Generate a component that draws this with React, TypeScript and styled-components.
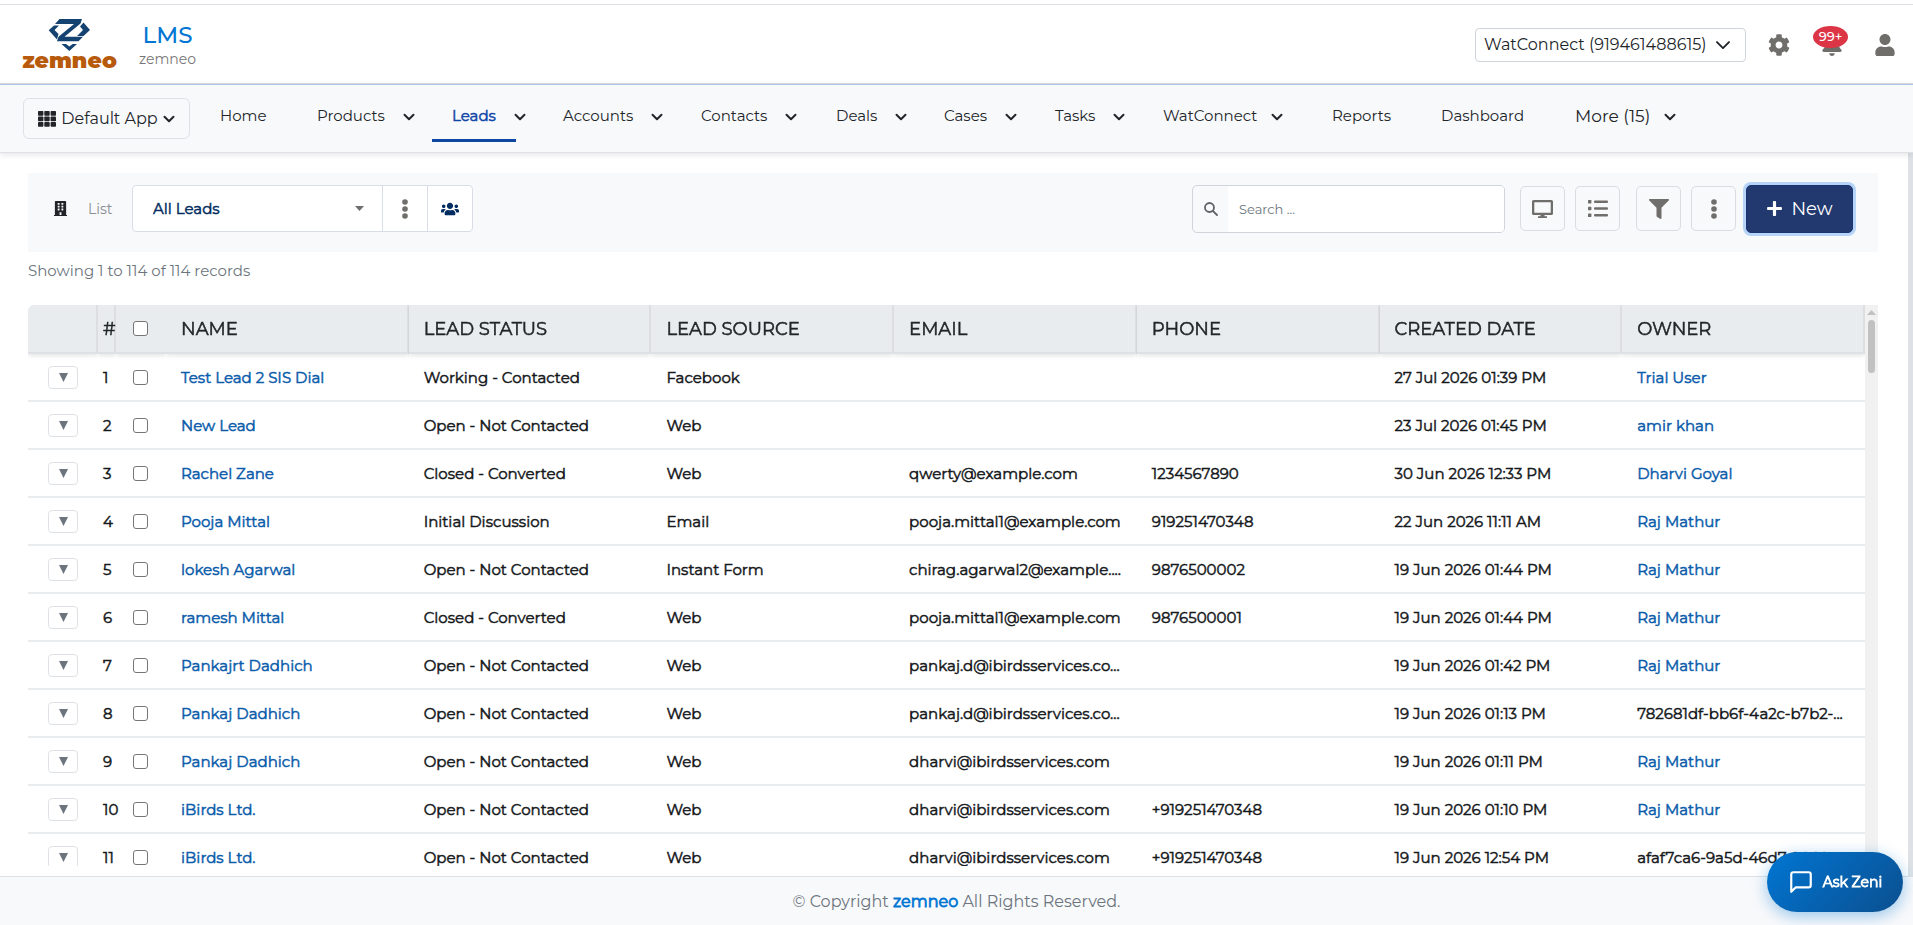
import React from "react";
import styled, { createGlobalStyle, css } from "styled-components";
import { FaCog, FaBell, FaUser, FaBuilding, FaUsers, FaFilter, FaPlus } from "react-icons/fa";
import { FiMessageSquare } from "react-icons/fi";

const GlobalStyle = createGlobalStyle`
  *, *::before, *::after { box-sizing: border-box; }
  body { margin: 0; background: #fff; }
  body, button, input, select {
    font-family: Montserrat, Inter, "Liberation Sans", sans-serif;
    color: #212529;
  }
  a { text-decoration: none; color: inherit; }
  button { cursor: pointer; padding: 0; }
`;

/* Regular weight thickened by a thin outline, so emphasis keeps the regular widths. */
const emphasis = css`
  font-weight: 400;
  -webkit-text-stroke: 0.5px currentColor;
`;

const strongEmphasis = css`
  font-weight: 400;
  -webkit-text-stroke: 0.8px currentColor;
`;

const Page = styled.div`
  display: flex;
  flex-direction: column;
  height: 100vh;
  overflow: hidden;
`;

const TopBar = styled.header`
  flex: none;
  display: flex;
  align-items: center;
  height: 80px;
  margin-top: 4px;
  padding: 2px 17px 0 19px;
  border-top: 1px solid #dee2e6;
  border-bottom: 1px solid #dcdcdc;
`;

const Logo = styled.svg`
  display: block;
  width: 102px;
  height: 64px;
`;

const Brand = styled.div`
  display: flex;
  flex-direction: column;
  align-items: center;
  margin: 0 auto 0 18px;
`;

const BrandName = styled.strong`
  margin-bottom: 2px;
  font-size: 23px;
  font-weight: 500;
  line-height: 28px;
  color: #0176d3;
`;

const BrandSub = styled.span`
  margin-bottom: 2px;
  font-size: 14px;
  line-height: 16px;
  color: #777;
`;

const SelectWrap = styled.div`
  display: flex;
  align-items: center;
  position: relative;
`;

const AccountSelect = styled.select`
  appearance: none;
  width: 271px;
  height: 34px;
  padding: 0 8px;
  border: 1px solid #ced4da;
  border-radius: 4px;
  background: #fff;
  font-size: 16px;
  line-height: 24px;
`;

const SelectMark = styled.span<{ $right: number }>`
  position: absolute;
  right: ${(p) => p.$right}px;
  display: flex;
  pointer-events: none;
`;

const TopAction = styled.button<{ $gap: number }>`
  display: flex;
  position: relative;
  margin-left: ${(p) => p.$gap}px;
  border: 0;
  background: none;
  color: #706e6b;
`;

const Badge = styled.span`
  position: absolute;
  top: -8px;
  left: -8px;
  width: 35px;
  height: 22px;
  border-radius: 50%;
  background: #dc3545;
  color: #fff;
  font-size: 13px;
  font-weight: 500;
  line-height: 21px;
  text-align: center;
`;

const NavBar = styled.nav`
  flex: none;
  position: relative;
  z-index: 1;
  display: flex;
  align-items: flex-start;
  height: 69px;
  padding: 13px 23px 0;
  border-top: 1px solid #aec6e4;
  border-bottom: 1px solid #dee2e6;
  background: #f8f9fb;
  box-shadow: 0 2px 6px rgba(0, 0, 0, 0.1);
`;

const AppButton = styled.button`
  display: flex;
  align-items: center;
  justify-content: center;
  gap: 5px;
  width: 167px;
  height: 41px;
  margin-right: 10px;
  border: 1px solid #dee2e6;
  border-radius: 6px;
  background: #f8f9fb;
  font-size: 16px;
`;

const NavItem = styled.div<{ $width: number }>`
  flex: none;
  display: flex;
  align-items: flex-start;
  width: ${(p) => p.$width}px;
`;

const NavLink = styled.a<{ $active?: boolean; $large?: boolean; $tight?: boolean }>`
  height: 44px;
  padding: 0 ${(p) => (p.$tight ? 16 : 20)}px 0 20px;
  border-bottom: 3px solid ${(p) => (p.$active ? "#0d47a1" : "transparent")};
  color: ${(p) => (p.$active ? "#1046a8" : "#212529")};
  font-size: ${(p) => (p.$large ? 17 : 15)}px;
  line-height: 36px;
  white-space: nowrap;
  ${(p) => p.$active && emphasis}
`;

const NavToggle = styled.button`
  display: flex;
  align-items: center;
  height: 38px;
  margin-left: -2px;
  border: 0;
  background: none;
`;

const Body = styled.div`
  flex: 1;
  min-height: 0;
  display: flex;
`;

const Main = styled.main`
  flex: 1;
  min-width: 0;
  display: flex;
  flex-direction: column;
  padding: 20px 30px 10px 28px;
`;

const PageScroll = styled.div`
  width: 5px;
  background: #dee2e6;
`;

const Toolbar = styled.div`
  flex: none;
  display: flex;
  align-items: center;
  height: 79px;
  padding: 0 25px 8px 25px;
  background: #f8f9fb;
`;

const ListLabel = styled.label`
  width: 44px;
  margin-left: 20px;
  font-size: 14px;
  color: #8a8f94;
`;

const ViewGroup = styled.div`
  display: flex;
  height: 47px;
  margin-right: auto;
  border: 1px solid #d8dde6;
  border-radius: 4px;
  background: #fff;
`;

const ViewSelect = styled.select`
  appearance: none;
  width: 249px;
  height: 100%;
  padding: 0 20px;
  border: 0;
  background: transparent;
  color: #032d60;
  font-size: 15px;
  ${emphasis}
`;

const ViewButton = styled.button`
  display: flex;
  align-items: center;
  justify-content: center;
  width: 45px;
  border: 0;
  border-left: 1px solid #d8dde6;
  background: none;
  color: #032d60;
`;

const SearchBox = styled.label`
  display: flex;
  width: 313px;
  height: 48px;
  margin-right: 15px;
  border: 1px solid #ced4da;
  border-radius: 5px;
  overflow: hidden;
`;

const SearchIcon = styled.span`
  display: flex;
  align-items: center;
  justify-content: center;
  width: 35px;
`;

const SearchInput = styled.input`
  flex: 1;
  min-width: 0;
  padding: 0 11px;
  border: 0;
  outline: 0;
  background: #fff;
  font-size: 13px;
  &::placeholder { color: #6c757d; opacity: 1; }
`;

const ToolButton = styled.button<{ $gap: number }>`
  display: flex;
  align-items: center;
  justify-content: center;
  width: 45px;
  height: 45px;
  margin-right: ${(p) => p.$gap}px;
  border: 1px solid #d8dde2;
  border-radius: 5px;
  background: #f8f9fb;
  color: #706e6b;
`;

const NewButton = styled.button`
  display: flex;
  align-items: center;
  justify-content: center;
  gap: 8px;
  width: 107px;
  height: 48px;
  border: 1px solid #1c3474;
  border-radius: 5px;
  background: #22396f;
  box-shadow: 0 0 0 3px #b5d4f7;
  color: #fff;
  font-size: 18px;
`;

const RecordCount = styled.p`
  flex: none;
  margin: 7px 0 23px;
  font-size: 15px;
  line-height: 23px;
  color: #6c757d;
`;

const TableArea = styled.div`
  flex: 1;
  min-height: 0;
  display: flex;
`;

const TableScroll = styled.div`
  flex: 1;
  min-width: 0;
  overflow-y: auto;
  scrollbar-width: none;
  border-top-left-radius: 6px;
`;

const Table = styled.table`
  width: 100%;
  table-layout: fixed;
  border-spacing: 0;
  font-size: 15px;
`;

const HeadCell = styled.th<{ $pad?: number; $plain?: boolean }>`
  position: sticky;
  top: 0;
  z-index: 1;
  height: 49px;
  padding: 0 0 0 ${(p) => p.$pad ?? 15}px;
  border-right: ${(p) => (p.$plain ? "0" : "2px solid #dcdee1")};
  border-bottom: 2px solid #dee2e6;
  background: #e9ecef;
  box-shadow: 0 2px 4px rgba(0, 0, 0, 0.1);
  clip-path: inset(0 0 -8px 0);
  font-size: 18px;
  line-height: 20px;
  text-align: left;
  white-space: nowrap;
  ${emphasis}
`;

const Cell = styled.td<{ $pad?: number; $visible?: boolean }>`
  height: 48px;
  padding: 0 ${(p) => (p.$pad === undefined ? 12 : 0)}px 0 ${(p) => p.$pad ?? 15}px;
  border-bottom: 2px solid #e9ecef;
  color: #16191c;
  white-space: nowrap;
  overflow: ${(p) => (p.$visible ? "visible" : "hidden")};
  text-overflow: ellipsis;
  ${emphasis}
`;

const CellLink = styled.a`
  color: #0b5cab;
`;

const ExpandButton = styled.button`
  display: flex;
  align-items: center;
  justify-content: center;
  width: 30px;
  height: 23px;
  border: 1px solid #dee2e6;
  border-radius: 4px;
  background: #fff;
  color: #6c757d;
`;

const Check = styled.input`
  appearance: none;
  display: block;
  width: 15px;
  height: 15px;
  margin: 0;
  border: 1px solid #767676;
  border-radius: 3px;
  background: #fff;
`;

const TableTrack = styled.div`
  display: flex;
  flex-direction: column;
  align-items: center;
  gap: 5px;
  width: 13px;
  padding-top: 5px;
  background: #f1f1f1;
`;

const TableThumb = styled.div`
  width: 7px;
  height: 53px;
  border-radius: 4px;
  background: #c1c1c1;
`;

const Footer = styled.footer`
  flex: none;
  height: 49px;
  border-top: 1px solid #dee2e6;
  background: #f8f9fb;
  font-size: 16px;
  line-height: 50px;
  text-align: center;
  color: #6c757d;
`;

const FooterLink = styled.a`
  color: #0176d3;
  ${strongEmphasis}
`;

const ChatButton = styled.button`
  position: fixed;
  right: 10px;
  bottom: 13px;
  z-index: 2;
  display: flex;
  align-items: center;
  justify-content: center;
  gap: 9px;
  width: 136px;
  height: 60px;
  border: 0;
  border-radius: 30px;
  background: linear-gradient(135deg, #0176d3, #0b4f8f);
  box-shadow: 0 4px 16px rgba(1, 118, 211, 0.4);
  color: #fff;
  font-size: 14px;
  ${strongEmphasis}
`;

const Chevron = ({ size = 12, stroke = 2 }: { size?: number; stroke?: number }) => (
  <svg width={size} height={size} viewBox="0 0 12 12" fill="none" stroke="#212529" strokeWidth={stroke} strokeLinecap="round" strokeLinejoin="round">
    <path d="M1.5 3.8 6 8.3l4.5-4.5" />
  </svg>
);

const AppsIcon = () => (
  <svg width="18" height="16" viewBox="0 0 18 16" fill="#212529">
    {[0, 5.5, 11].map((y) =>
      [0, 6.3, 12.6].map((x) => <rect key={`${x}-${y}`} x={x} y={y} width="5.4" height="4.7" rx="0.8" />)
    )}
  </svg>
);

const Dots = () => (
  <svg width="6" height="20" viewBox="0 0 6 20" fill="#706e6b">
    <circle cx="3" cy="3" r="2.8" />
    <circle cx="3" cy="10" r="2.8" />
    <circle cx="3" cy="17" r="2.8" />
  </svg>
);

const MonitorIcon = () => (
  <svg width="21" height="18" viewBox="0 0 21 18" fill="#706e6b">
    <path fillRule="evenodd" d="M1.5 0h18A1.5 1.5 0 0 1 21 1.5v12a1.5 1.5 0 0 1-1.5 1.5H12.5v1.3H15V18H6v-1.700h2.500V15h-7A1.500 1.500 0 0 1 0 13.500v-12A1.500 1.500 0 0 1 1.500 0ZM2.300 2.200v10.600h16.400V2.200Z" />
  </svg>
);

const ListIcon = () => (
  <svg width="20" height="17" viewBox="0 0 20 17" fill="#706e6b">
    {[0, 6.8, 13.6].map((y) => (
      <g key={y}>
        <rect x="0" y={y} width="3.4" height="3.4" rx="0.6" />
        <rect x="6" y={y + 0.4} width="14" height="2.6" rx="1" />
      </g>
    ))}
  </svg>
);

const Magnifier = () => (
  <svg width="14" height="14" viewBox="0 0 14 14" fill="none" stroke="#5f6368" strokeWidth="1.8">
    <circle cx="5.5" cy="5.5" r="4.5" />
    <path d="m8.800 8.800 4.200 4.200" strokeLinecap="round" />
  </svg>
);

const LogoMark = () => (
  <Logo viewBox="-1 -4 102 64" role="img" aria-label="zemneo">
    <g fill="#144372">
      <path d="M39.500 2H62l-1.500 4.500L44.500 19.700H63L58.500 24.300H37l1.500-4.500L54 7H35Z" />
      <path d="M34 8.500h5l-4.500 4.500 4 4-1.500 5.500L28.700 13.300Z" />
      <path d="M63.500 5.500 70 13l-6.500 6H57l6-6-3-3.500Z" />
      <path d="M41.500 27h4.500l3.300 2.500L52.700 27H57l-7.700 7Z" />
    </g>
    <text x="49.5" y="51" textAnchor="middle" fontFamily="Montserrat, Inter, sans-serif" fontWeight="900" fontSize="22" fill="#b85a0b">zemneo</text>
  </Logo>
);

const navItems = [
  { label: "Home", width: 97 },
  { label: "Products", width: 135, menu: true },
  { label: "Leads", width: 111, menu: true, active: true },
  { label: "Accounts", width: 138, menu: true },
  { label: "Contacts", width: 135, menu: true },
  { label: "Deals", width: 108, menu: true },
  { label: "Cases", width: 111, menu: true },
  { label: "Tasks", width: 108, menu: true },
  { label: "WatConnect", width: 169, menu: true, tight: true },
  { label: "Reports", width: 109 },
  { label: "Dashboard", width: 134 },
  { label: "More (15)", width: 130, menu: true, large: true, tight: true },
];

const columns = ["NAME", "LEAD STATUS", "LEAD SOURCE", "EMAIL", "PHONE", "CREATED DATE", "OWNER"];

const leads: string[][] = [
  ["Test Lead 2 SIS Dial", "Working - Contacted", "Facebook", "", "", "27 Jul 2026 01:39 PM", "Trial User"],
  ["New Lead", "Open - Not Contacted", "Web", "", "", "23 Jul 2026 01:45 PM", "amir khan"],
  ["Rachel Zane", "Closed - Converted", "Web", "qwerty@example.com", "1234567890", "30 Jun 2026 12:33 PM", "Dharvi Goyal"],
  ["Pooja Mittal", "Initial Discussion", "Email", "pooja.mittal1@example.com", "919251470348", "22 Jun 2026 11:11 AM", "Raj Mathur"],
  ["lokesh Agarwal", "Open - Not Contacted", "Instant Form", "chirag.agarwal2@example....", "9876500002", "19 Jun 2026 01:44 PM", "Raj Mathur"],
  ["ramesh Mittal", "Closed - Converted", "Web", "pooja.mittal1@example.com", "9876500001", "19 Jun 2026 01:44 PM", "Raj Mathur"],
  ["Pankajrt Dadhich", "Open - Not Contacted", "Web", "pankaj.d@ibirdsservices.co...", "", "19 Jun 2026 01:42 PM", "Raj Mathur"],
  ["Pankaj Dadhich", "Open - Not Contacted", "Web", "pankaj.d@ibirdsservices.co...", "", "19 Jun 2026 01:13 PM", "782681df-bb6f-4a2c-b7b2-..."],
  ["Pankaj Dadhich", "Open - Not Contacted", "Web", "dharvi@ibirdsservices.com", "", "19 Jun 2026 01:11 PM", "Raj Mathur"],
  ["iBirds Ltd.", "Open - Not Contacted", "Web", "dharvi@ibirdsservices.com", "+919251470348", "19 Jun 2026 01:10 PM", "Raj Mathur"],
  ["iBirds Ltd.", "Open - Not Contacted", "Web", "dharvi@ibirdsservices.com", "+919251470348", "19 Jun 2026 12:54 PM", "afaf7ca6-9a5d-46d7-9868-..."],
];

const isPerson = (owner: string) => !/^[0-9a-f]{8}-/.test(owner);

export default function App() {
  return (
    <Page>
      <GlobalStyle />
      <TopBar>
        <LogoMark />
        <Brand>
          <BrandName>LMS</BrandName>
          <BrandSub>zemneo</BrandSub>
        </Brand>
        <SelectWrap>
          <AccountSelect aria-label="WhatsApp account">
            <option>WatConnect (919461488615)</option>
          </AccountSelect>
          <SelectMark $right={15}><Chevron size={16} stroke={1.4} /></SelectMark>
        </SelectWrap>
        <TopAction $gap={22} aria-label="Settings"><FaCog size={22} /></TopAction>
        <TopAction $gap={31} aria-label="Notifications">
          <FaBell size={22} />
          <Badge>99+</Badge>
        </TopAction>
        <TopAction $gap={31} aria-label="Profile"><FaUser size={22} /></TopAction>
      </TopBar>

      <NavBar>
        <AppButton>
          <AppsIcon />
          Default App
          <Chevron />
        </AppButton>
        {navItems.map((item) => (
          <NavItem key={item.label} $width={item.width}>
            <NavLink href="#" $active={item.active} $large={item.large} $tight={item.tight}>{item.label}</NavLink>
            {item.menu && <NavToggle aria-label={`${item.label} menu`}><Chevron /></NavToggle>}
          </NavItem>
        ))}
      </NavBar>

      <Body>
        <Main>
          <Toolbar>
            <FaBuilding size={15} />
            <ListLabel htmlFor="view">List</ListLabel>
            <ViewGroup>
              <SelectWrap>
                <ViewSelect id="view"><option>All Leads</option></ViewSelect>
                <SelectMark $right={18}>
                  <svg width="9" height="5" viewBox="0 0 9 5" fill="#706e6b"><path d="M0 0h9L4.500 5Z" /></svg>
                </SelectMark>
              </SelectWrap>
              <ViewButton aria-label="View options"><Dots /></ViewButton>
              <ViewButton aria-label="Share view"><FaUsers size={18} /></ViewButton>
            </ViewGroup>
            <SearchBox>
              <SearchIcon><Magnifier /></SearchIcon>
              <SearchInput type="text" aria-label="Search" placeholder="Search ..." />
            </SearchBox>
            <ToolButton $gap={10} aria-label="Display"><MonitorIcon /></ToolButton>
            <ToolButton $gap={16} aria-label="List view"><ListIcon /></ToolButton>
            <ToolButton $gap={10} aria-label="Filter"><FaFilter size={20} /></ToolButton>
            <ToolButton $gap={10} aria-label="More actions"><Dots /></ToolButton>
            <NewButton><FaPlus size={17} />New</NewButton>
          </Toolbar>

          <RecordCount>Showing 1 to 114 of 114 records</RecordCount>

          <TableArea>
            <TableScroll>
              <Table>
                <colgroup>
                  <col width={70} />
                  <col width={18} />
                  <col width={50} />
                  {columns.map((c) => <col key={c} />)}
                </colgroup>
                <thead>
                  <tr>
                    <HeadCell aria-label="Expand" />
                    <HeadCell $pad={5}>#</HeadCell>
                    <HeadCell $pad={17} $plain><Check type="checkbox" aria-label="Select all leads" /></HeadCell>
                    {columns.map((c) => <HeadCell key={c}>{c}</HeadCell>)}
                  </tr>
                </thead>
                <tbody>
                  {leads.map((lead, i) => (
                    <tr key={i}>
                      <Cell $pad={20}>
                        <ExpandButton aria-label="Expand row">
                          <svg width="9" height="9" viewBox="0 0 9 9" fill="currentColor"><path d="M0 0h9L4.500 9Z" /></svg>
                        </ExpandButton>
                      </Cell>
                      <Cell $pad={5} $visible>{i + 1}</Cell>
                      <Cell $pad={17}><Check type="checkbox" aria-label={`Select ${lead[0]}`} /></Cell>
                      {lead.map((value, j) => (
                        <Cell key={j}>
                          {j === 0 || (j === 6 && isPerson(value)) ? <CellLink href="#">{value}</CellLink> : value}
                        </Cell>
                      ))}
                    </tr>
                  ))}
                </tbody>
              </Table>
            </TableScroll>
            <TableTrack aria-hidden="true">
              <svg width="9" height="5" viewBox="0 0 9 5" fill="#c1c1c1"><path d="M0 5h9L4.500 0Z" /></svg>
              <TableThumb />
            </TableTrack>
          </TableArea>
        </Main>
        <PageScroll aria-hidden="true" />
      </Body>

      <Footer>© Copyright <FooterLink href="#">zemneo</FooterLink> All Rights Reserved.</Footer>
      <ChatButton><FiMessageSquare size={26} />Ask Zeni</ChatButton>
    </Page>
  );
}
